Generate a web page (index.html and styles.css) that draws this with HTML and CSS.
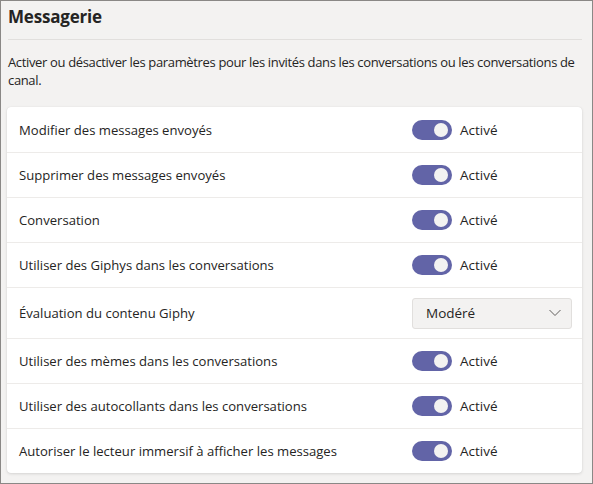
FILE: index.html
```html
<!DOCTYPE html>
<html lang="fr">
<head>
<meta charset="utf-8">
<link rel="stylesheet" href="styles.css">
</head>
<body>
<div class="frame">
  <h1 class="title">Messagerie</h1>
  <div class="sep"></div>
  <p class="desc">Activer ou désactiver les paramètres pour les invités dans les conversations ou les conversations de canal.</p>
  <div class="card">
    <div class="row"><span class="label">Modifier des messages envoyés</span><span class="ctrl"><span class="toggle"><span class="knob"></span></span><span class="state">Activé</span></span></div>
    <div class="row"><span class="label">Supprimer des messages envoyés</span><span class="ctrl"><span class="toggle"><span class="knob"></span></span><span class="state">Activé</span></span></div>
    <div class="row"><span class="label">Conversation</span><span class="ctrl"><span class="toggle"><span class="knob"></span></span><span class="state">Activé</span></span></div>
    <div class="row"><span class="label">Utiliser des Giphys dans les conversations</span><span class="ctrl"><span class="toggle"><span class="knob"></span></span><span class="state">Activé</span></span></div>
    <div class="row row-tall"><span class="label">Évaluation du contenu Giphy</span><span class="ctrl"><span class="select"><span>Modéré</span><svg class="chev" width="12" height="8" viewBox="0 0 12 8"><path d="M0.5 1 L6 6.5 L11.5 1" fill="none" stroke="#605e5c" stroke-width="1"/></svg></span></span></div>
    <div class="row"><span class="label">Utiliser des mèmes dans les conversations</span><span class="ctrl"><span class="toggle"><span class="knob"></span></span><span class="state">Activé</span></span></div>
    <div class="row"><span class="label">Utiliser des autocollants dans les conversations</span><span class="ctrl"><span class="toggle"><span class="knob"></span></span><span class="state">Activé</span></span></div>
    <div class="row"><span class="label">Autoriser le lecteur immersif à afficher les messages</span><span class="ctrl"><span class="toggle"><span class="knob"></span></span><span class="state">Activé</span></span></div>
  </div>
</div>
</body>
</html>
```
FILE: styles.css
```css
html, body {
  margin: 0;
  padding: 0;
}
body {
  font-family: "Segoe UI", "Open Sans", "Noto Sans", sans-serif;
  color: #252423;
  background: #f3f2f1;
}
.frame {
  box-sizing: border-box;
  width: 593px;
  height: 484px;
  border: 1px solid #8a8886;
  background: #f3f2f1;
  padding: 0 10px 0 6px;
  overflow: hidden;
}
.title {
  margin: 0;
  padding: 4px 0 0 1px;
  height: 34px;
  box-sizing: border-box;
  font-size: 17px;
  font-weight: 700;
  letter-spacing: -0.2px;
  line-height: 24px;
}
.sep {
  height: 1px;
  background: #e1dfdd;
  margin: 4px 0 0 1px;
}
.desc {
  margin: 13px 0 0 1px;
  font-size: 13px;
  line-height: 18px;
  letter-spacing: -0.35px;
}
.card {
  margin-top: 18px;
  background: #fff;
  border-radius: 4px;
  box-shadow: 0 1px 3px rgba(0,0,0,0.12), 0 0 1px rgba(0,0,0,0.1);
}
.row {
  box-sizing: border-box;
  display: flex;
  align-items: center;
  height: 45px;
  padding: 0 10px 0 12px;
  border-top: 1px solid #edebe9;
  font-size: 13.1px;
}
.row:first-child {
  border-top: none;
}
.row-tall {
  height: 51px;
}
.label {
  flex: 1;
}
.ctrl {
  width: 160px;
  display: flex;
  align-items: center;
}
.toggle {
  width: 40px;
  height: 20px;
  border-radius: 10px;
  background: #6264a7;
  position: relative;
  flex: none;
}
.knob {
  position: absolute;
  right: 4px;
  top: 3px;
  width: 14px;
  height: 14px;
  border-radius: 50%;
  background: #f3f2f1;
}
.state {
  margin-left: 8px;
  font-size: 13.5px;
}
.select {
  box-sizing: border-box;
  width: 160px;
  height: 31px;
  border: 1px solid #e1dfdd;
  border-radius: 3px;
  background: #f3f2f1;
  display: flex;
  align-items: center;
  justify-content: space-between;
  padding: 0 10px 0 13px;
  font-size: 13.5px;
}
```
